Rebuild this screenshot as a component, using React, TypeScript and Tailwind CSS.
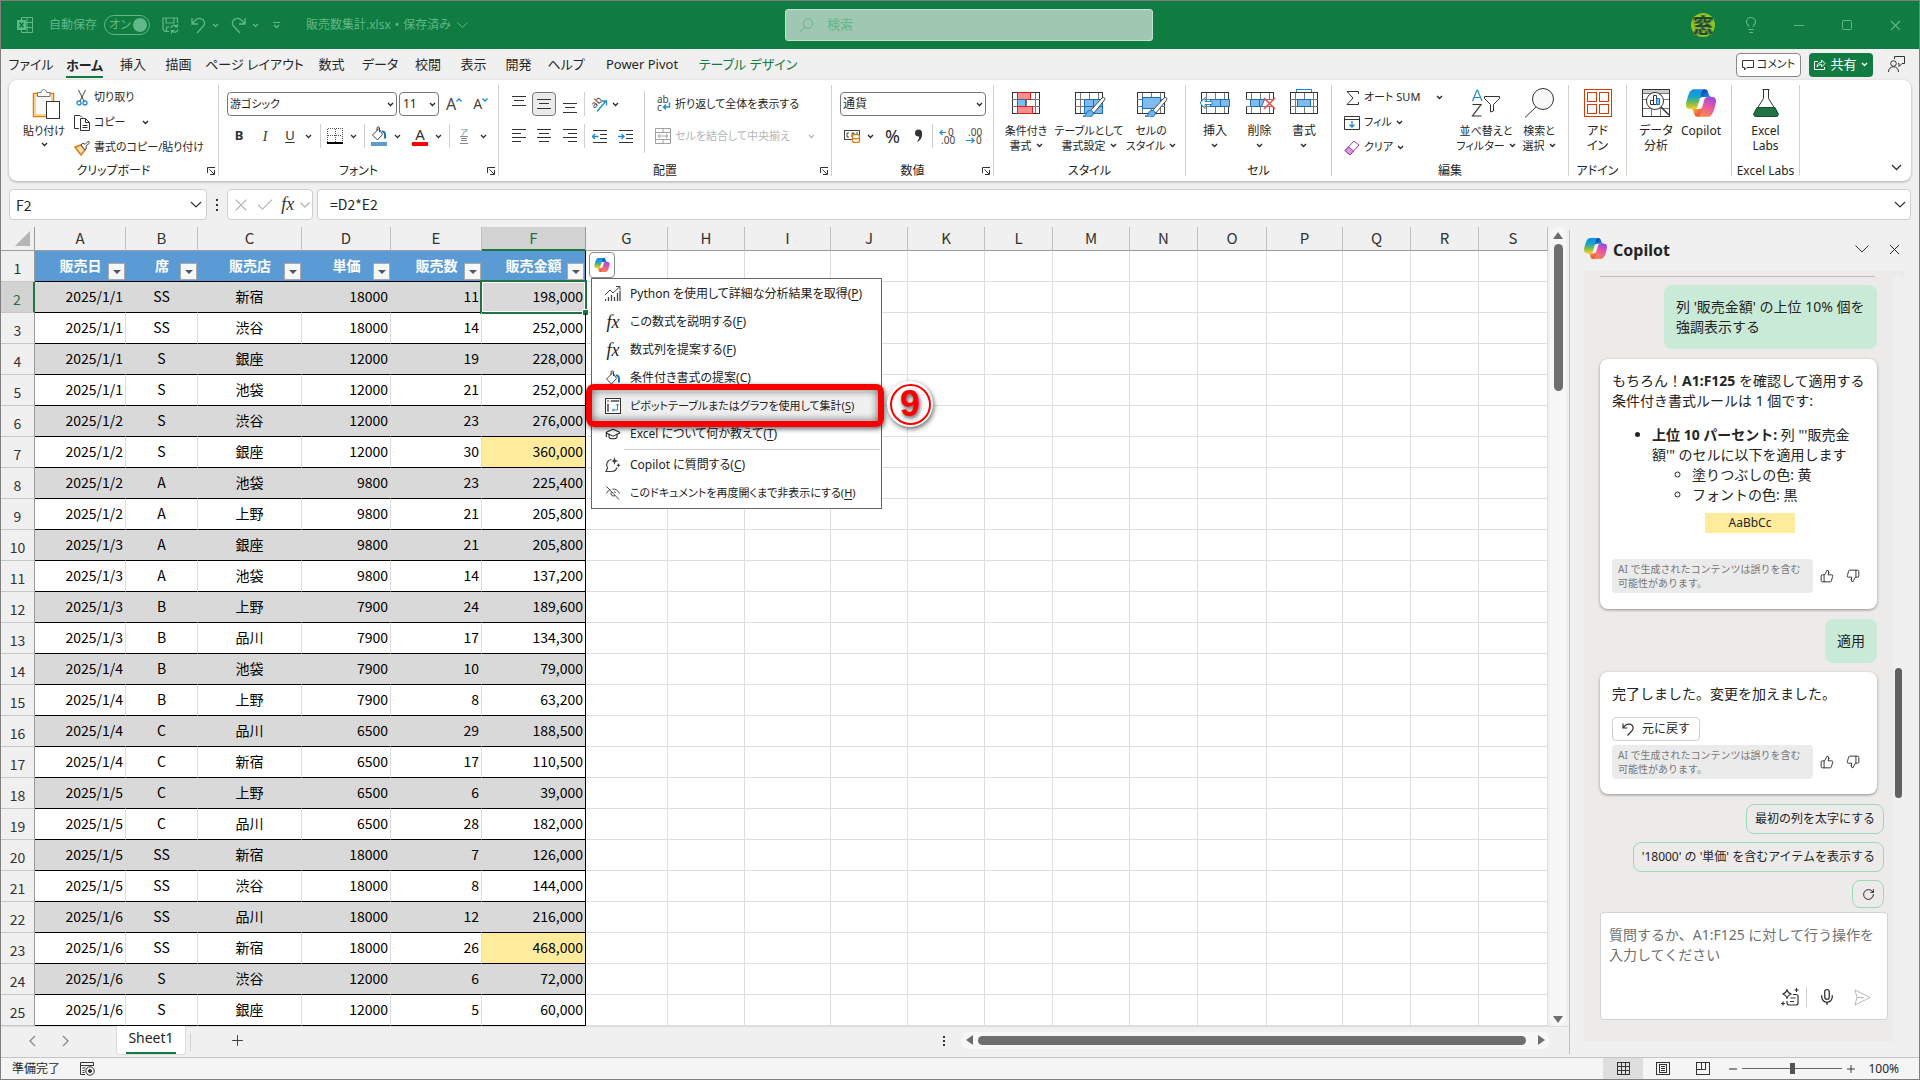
import React, { useState } from "react";
import {
  Lightbulb,
  Minus,
  Square,
  X,
  Check,
  Plus,
  ThumbsUp,
  ThumbsDown,
  Mic,
  RotateCw,
  GraduationCap,
} from "lucide-react";

type Sale = [string, string, string, string, string, string];

const sales: Sale[] = [
  ["2025/1/1", "SS", "新宿", "18000", "11", "198,000"],
  ["2025/1/1", "SS", "渋谷", "18000", "14", "252,000"],
  ["2025/1/1", "S", "銀座", "12000", "19", "228,000"],
  ["2025/1/1", "S", "池袋", "12000", "21", "252,000"],
  ["2025/1/2", "S", "渋谷", "12000", "23", "276,000"],
  ["2025/1/2", "S", "銀座", "12000", "30", "360,000"],
  ["2025/1/2", "A", "池袋", "9800", "23", "225,400"],
  ["2025/1/2", "A", "上野", "9800", "21", "205,800"],
  ["2025/1/3", "A", "銀座", "9800", "21", "205,800"],
  ["2025/1/3", "A", "池袋", "9800", "14", "137,200"],
  ["2025/1/3", "B", "上野", "7900", "24", "189,600"],
  ["2025/1/3", "B", "品川", "7900", "17", "134,300"],
  ["2025/1/4", "B", "池袋", "7900", "10", "79,000"],
  ["2025/1/4", "B", "上野", "7900", "8", "63,200"],
  ["2025/1/4", "C", "品川", "6500", "29", "188,500"],
  ["2025/1/4", "C", "新宿", "6500", "17", "110,500"],
  ["2025/1/5", "C", "上野", "6500", "6", "39,000"],
  ["2025/1/5", "C", "品川", "6500", "28", "182,000"],
  ["2025/1/5", "SS", "新宿", "18000", "7", "126,000"],
  ["2025/1/5", "SS", "渋谷", "18000", "8", "144,000"],
  ["2025/1/6", "SS", "品川", "18000", "12", "216,000"],
  ["2025/1/6", "SS", "新宿", "18000", "26", "468,000"],
  ["2025/1/6", "S", "渋谷", "12000", "6", "72,000"],
  ["2025/1/6", "S", "銀座", "12000", "5", "60,000"],
];

const headers = ["販売日", "席", "販売店", "単価", "販売数", "販売金額"];

const columns = [
  { name: "A", width: 91 },
  { name: "B", width: 72 },
  { name: "C", width: 104 },
  { name: "D", width: 89 },
  { name: "E", width: 91 },
  { name: "F", width: 104 },
  { name: "G", width: 82 },
  { name: "H", width: 77 },
  { name: "I", width: 86 },
  { name: "J", width: 77 },
  { name: "K", width: 77 },
  { name: "L", width: 68 },
  { name: "M", width: 77 },
  { name: "N", width: 68 },
  { name: "O", width: 69 },
  { name: "P", width: 76 },
  { name: "Q", width: 68 },
  { name: "R", width: 68 },
  { name: "S", width: 69 },
];

const tabs = [
  { name: "ファイル", width: "w-[56px]" },
  { name: "ホーム", width: "w-[51px]" },
  { name: "挿入", width: "w-[46px]" },
  { name: "描画", width: "w-[45px]" },
  { name: "ページ レイアウト", width: "w-[107px]" },
  { name: "数式", width: "w-[47px]" },
  { name: "データ", width: "w-[50px]" },
  { name: "校閲", width: "w-[46px]" },
  { name: "表示", width: "w-[45px]" },
  { name: "開発", width: "w-[45px]" },
  { name: "ヘルプ", width: "w-[50px]" },
  { name: "Power Pivot", width: "w-[102px]" },
  { name: "テーブル デザイン", width: "w-[110px]" },
];

function Chevron({ className = "" }: { className?: string }) {
  return (
    <svg width="7" height="5" viewBox="0 0 7 5" className={`shrink-0 ${className}`}>
      <path d="M1 1l2.500 2.500L6 1" fill="none" stroke="currentColor" strokeWidth="1.300" />
    </svg>
  );
}

function BigChevron({ className = "" }: { className?: string }) {
  return (
    <svg width="12" height="7" viewBox="0 0 12 7" className={`shrink-0 ${className}`}>
      <path d="M1 1l5 5 5-5" fill="none" stroke="currentColor" strokeWidth="1.200" />
    </svg>
  );
}

function CopilotLogo({ className = "" }: { className?: string }) {
  return (
    <svg viewBox="0 0 24 22" className={className}>
      <defs>
        <linearGradient id="cpTop" x1="0.9" y1="0.8" x2="0.3" y2="0.1">
          <stop offset="0" stopColor="#1ea8f2" />
          <stop offset="1" stopColor="#1240b8" />
        </linearGradient>
        <linearGradient id="cpBottom" x1="0.2" y1="0.3" x2="0.8" y2="0.9">
          <stop offset="0" stopColor="#f5b83d" />
          <stop offset="1" stopColor="#e8453c" />
        </linearGradient>
        <linearGradient id="cpLeft" x1="0.4" y1="0" x2="0.4" y2="1">
          <stop offset="0" stopColor="#0d8fe8" />
          <stop offset="0.4" stopColor="#1aa6c4" />
          <stop offset="0.7" stopColor="#7fbf45" />
          <stop offset="1" stopColor="#f7cf2b" />
        </linearGradient>
        <linearGradient id="cpRight" x1="0.7" y1="0" x2="0.3" y2="1">
          <stop offset="0" stopColor="#a347e0" />
          <stop offset="0.5" stopColor="#ec5b9c" />
          <stop offset="1" stopColor="#fb8a4a" />
        </linearGradient>
      </defs>
      <path
        fill="url(#cpTop)"
        d="M17.533 1.829A2.528 2.528 0 0015.110 0h-.737a2.531 2.531 0 00-2.484 2.087l-1.263 6.937.314-1.080a2.528 2.528 0 012.424-1.833h4.284l1.797.706 1.731-.706h-.505a2.528 2.528 0 01-2.423-1.829l-.715-2.453z"
      />
      <path
        fill="url(#cpBottom)"
        d="M6.726 20.160A2.528 2.528 0 009.152 22h1.566c1.370 0 2.490-1.100 2.525-2.480l.170-6.690-.357 1.228a2.528 2.528 0 01-2.423 1.830h-4.320l-1.540-.842-1.667.843h.497c1.124 0 2.113.750 2.426 1.840l.697 2.432z"
      />
      <path
        fill="url(#cpLeft)"
        d="M15 0H6.252c-2.500 0-4 3.331-5 6.662-1.184 3.947-2.734 9.225 1.750 9.225H6.780c1.130 0 2.120-.753 2.430-1.847.657-2.317 1.809-6.359 2.713-9.436.460-1.563.842-2.906 1.430-3.742A1.970 1.970 0 0115 0z"
      />
      <path
        fill="url(#cpRight)"
        d="M9 22h8.749c2.500 0 4-3.332 5-6.663 1.184-3.947 2.734-9.226-1.750-9.226H17.220c-1.129 0-2.118.754-2.430 1.848a1149.200 1149.200 0 01-2.713 9.437c-.460 1.564-.842 2.907-1.430 3.743A1.970 1.970 0 019 22z"
      />
    </svg>
  );
}

function FxIcon({ className = "" }: { className?: string }) {
  return (
    <span
      className={`inline-block text-center font-['Liberation_Serif',serif] italic text-[18px] leading-4 ${className}`}
    >
      fx
    </span>
  );
}

function FillIcon() {
  return (
    <svg width="16" height="16" viewBox="0 0 16 16" fill="none">
      <path d="M1.500 9L8 2.500l3.500 6L6.500 14z" stroke="#444" strokeLinejoin="round" />
      <path d="M6 5V2c0-1.500 2.500-1.500 2.500 0v4" stroke="#444" />
      <path d="M11 5.500c2.500-.5 3.500 2 3 7" stroke="#1a6fb5" strokeWidth="2" />
    </svg>
  );
}

function AlignIcon({ lines }: { lines: [number, number][] }) {
  return (
    <svg width="14" height="14" viewBox="0 0 14 14" shapeRendering="crispEdges">
      {lines.map(([x, w], i) => (
        <rect key={i} x={x} y={i * 4} width={w} height="1" fill="#333" />
      ))}
    </svg>
  );
}

function VAlignIcon({ top }: { top: number }) {
  return (
    <svg width="14" height="18" viewBox="0 0 14 18" shapeRendering="crispEdges">
      <rect x="0" y={top} width="14" height="1" fill="#333" />
      <rect x="2" y={top + 4} width="10" height="1" fill="#333" />
      <rect x="0" y={top + 9} width="14" height="1" fill="#333" />
    </svg>
  );
}

function IndentIcon({ right }: { right?: boolean }) {
  return (
    <svg width="15" height="14" viewBox="0 0 15 14" fill="none">
      <path d="M1 1.500h14M8 5.500h7M8 9.500h7M1 13.500h14" stroke="#333" />
      <path
        d={right ? "M0 7.500h6M3.500 5l2.500 2.500L3.500 10" : "M6.500 7.500h-6M3 5L.5 7.500 3 10"}
        stroke="#1e8bd1"
        strokeWidth="1.300"
      />
    </svg>
  );
}

function SheetIcon({ children }: { children?: React.ReactNode }) {
  return (
    <svg width="34" height="28" viewBox="0 0 34 28" fill="none">
      <rect x="3.500" y="3.500" width="27" height="21" fill="#fff" stroke="#333" />
      <path d="M3 10.500h28M3 17.500h28M8.500 4v20M17.500 4v20M26.500 4v20" stroke="#777" />
      {children}
    </svg>
  );
}

function Brush() {
  return (
    <>
      <path d="M18 22L30 9c2-1.500 3.500 0 2.500 2L22 24z" fill="#fff" stroke="#444" />
      <path d="M11 27c3 0 3-2 4-4s5-2 6 0 0 4-3 5-5 0-7-1z" fill="#6fb1e8" stroke="#1a6fb5" />
    </>
  );
}

function Launcher() {
  return (
    <button type="button" aria-label="オプション" className="absolute bottom-0 right-[2px] h-[10px] w-[10px]">
      <svg width="10" height="10" viewBox="0 0 10 10" fill="none">
        <path d="M1.500 7V1.500H9M3.500 3.500l4.500 4.500M8.500 4v4.500H4" stroke="#333" />
      </svg>
    </button>
  );
}

function Group({
  label,
  width,
  launcher,
  children,
}: {
  label: string;
  width: string;
  launcher?: boolean;
  children: React.ReactNode;
}) {
  return (
    <section className={`relative my-[5px] flex shrink-0 flex-col border-r border-[#d0d0d0] ${width}`}>
      <div className="flex flex-1">{children}</div>
      <div className="h-[11px] whitespace-nowrap text-center leading-3">{label}</div>
      {launcher && <Launcher />}
    </section>
  );
}

function LargeButton({
  icon,
  lines,
  width,
  arrow,
  text = "text-[12px]",
}: {
  icon: React.ReactNode;
  lines: string[];
  width: string;
  arrow?: boolean;
  text?: string;
}) {
  return (
    <button type="button" className={`flex shrink-0 flex-col items-center pt-[3px] ${width} ${text}`}>
      <span className="flex h-[30px] items-center justify-center">{icon}</span>
      <span className="mt-[5px] whitespace-nowrap leading-[15px]">
        {lines.map((line, i) => (
          <span key={i} className="flex h-[15px] items-center justify-center gap-1">
            {line}
            {arrow && i === lines.length - 1 && <Chevron />}
          </span>
        ))}
      </span>
    </button>
  );
}

function SmallButton({
  icon,
  label,
  arrow,
  gap = "gap-1",
}: {
  icon: React.ReactNode;
  label: string;
  arrow?: boolean;
  gap?: string;
}) {
  return (
    <button type="button" className="flex h-[25px] items-center whitespace-nowrap text-[11px]">
      <span className="mr-1 flex w-4 justify-center">{icon}</span>
      <span className={`flex items-center ${gap}`}>
        {label}
        {arrow && <Chevron />}
      </span>
    </button>
  );
}

function Divider({ className = "h-6" }: { className?: string }) {
  return <span className={`w-px shrink-0 bg-[#d0d0d0] ${className}`} />;
}

function TitleBar() {
  return (
    <header className="flex h-12 shrink-0 items-center bg-[#107c41] text-[#5fb888]">
      <div className="flex flex-1 items-center pl-4 text-[12px]">
        <svg width="16" height="16" viewBox="0 0 16 16" fill="none" stroke="currentColor">
          <path d="M4.500 3V.500h11v15h-11V13M10 .500v15M4.500 5.500h11M4.500 10.500h11" />
          <rect x="0" y="3" width="9" height="10" fill="currentColor" stroke="none" />
          <path d="M2.500 5.500l4 5M6.500 5.500l-4 5" stroke="#107c41" strokeWidth="1.500" />
        </svg>
        <label className="ml-4 flex items-center gap-[7px]">
          <span>自動保存</span>
          <input type="checkbox" defaultChecked className="sr-only" />
          <span className="flex h-5 w-[46px] items-center justify-between rounded-full border border-current pl-1 pr-[2px]">
            オン
            <span className="h-[14px] w-[14px] rounded-full bg-current" />
          </span>
        </label>
        <button type="button" aria-label="上書き保存" className="ml-3">
          <svg width="17" height="17" viewBox="0 0 17 17" fill="none" stroke="currentColor" strokeWidth="1.200">
            <path d="M7 14.500H3L1 12.500V1h14.500v5M4 1v5h8V1M4.500 14v-4h3" />
            <path d="M9 11a3.500 3.500 0 016-1.500M15.500 7v3h-3M16 12.500a3.500 3.500 0 01-6 1.500M9.500 16.500v-3h3" />
          </svg>
        </button>
        <button type="button" aria-label="元に戻す" className="ml-3 flex items-center gap-[6px]">
          <svg width="15" height="17" viewBox="0 0 15 17" fill="none" stroke="currentColor" strokeWidth="1.300">
            <path d="M1 1v6h6M1.500 6.500C4 3 7 .500 10.500 1.800c3 1 4 4.700 2 7.200L6 16" />
          </svg>
          <Chevron />
        </button>
        <button type="button" aria-label="やり直し" className="ml-[12px] flex items-center gap-[6px]">
          <svg width="15" height="17" viewBox="0 0 15 17" fill="none" stroke="currentColor" strokeWidth="1.300">
            <path d="M14 1v6H8M13.500 6.500C11 3 8 .500 4.500 1.800c-3 1-4 4.700-2 7.200L9 16" />
          </svg>
          <Chevron />
        </button>
        <button type="button" aria-label="クイック アクセス ツール バー" className="ml-[14px] flex flex-col items-center gap-px">
          <span className="h-px w-[7px] bg-current" />
          <Chevron />
        </button>
        <button type="button" className="ml-[26px] flex items-center gap-[6px] whitespace-nowrap">
          <span className="flex gap-1">
            <span>販売数集計.xlsx</span>
            <span>•</span>
            <span>保存済み</span>
          </span>
          <svg width="11" height="6" viewBox="0 0 11 6" fill="none" stroke="currentColor">
            <path d="M.5.5l5 5 5-5" />
          </svg>
        </button>
      </div>
      <label className="flex h-8 w-[368px] items-center rounded-[3px] border border-[#c5dfd0] bg-[#a0c7b1] pl-[13px]">
        <svg width="15" height="15" viewBox="0 0 15 15" fill="none" stroke="currentColor">
          <circle cx="9" cy="5.500" r="4.800" />
          <path d="M5.500 9.200L.7 14" />
        </svg>
        <input
          type="search"
          placeholder="検索"
          aria-label="検索"
          className="ml-[13px] flex-1 bg-transparent text-[13px] outline-none placeholder:text-[#5fb888]"
        />
      </label>
      <div className="flex w-[766px] justify-end">
        <span className="flex w-12 justify-center">
          <span className="flex h-6 w-6 items-center justify-center rounded-full bg-[#8fc31f] font-['Noto_Sans_CJK_JP',sans-serif] text-[20px] font-bold leading-6 text-[#1d4d17] [text-shadow:0_0_1px_#fff,1px_0_0_#1d4d17,-1px_0_0_#1d4d17]">
            窓
          </span>
        </span>
        <button type="button" aria-label="ヒント" className="flex w-12 items-center justify-center">
          <Lightbulb size={18} strokeWidth={1.500} />
        </button>
        <button type="button" aria-label="最小化" className="flex w-12 items-center justify-center">
          <span className="h-px w-[10px] bg-current" />
        </button>
        <button type="button" aria-label="最大化" className="flex w-12 items-center justify-center">
          <Square size={12} strokeWidth={2} />
        </button>
        <button type="button" aria-label="閉じる" className="flex w-12 items-center justify-center">
          <X size={17} strokeWidth={1.500} />
        </button>
      </div>
    </header>
  );
}

function TabRow() {
  return (
    <nav className="flex h-[31px] shrink-0 items-center pl-[2px] text-[13px]">
      {tabs.map((tab, i) => (
        <button
          type="button"
          key={tab.name}
          className={`flex h-full shrink-0 items-center justify-center whitespace-nowrap pt-px ${tab.width} ${
            i === 12 ? "text-[#107c41]" : ""
          }`}
        >
          {i === 1 ? (
            <span className="border-b-2 border-[#107c41] pt-[2px] font-bold leading-[22px]">{tab.name}</span>
          ) : (
            tab.name
          )}
        </button>
      ))}
      <div className="ml-auto flex items-center pr-[14px]">
        <button
          type="button"
          className="flex h-6 w-[65px] items-center justify-center gap-[3px] whitespace-nowrap rounded border border-[#888] bg-white text-[11px]"
        >
          <svg width="12" height="12" viewBox="0 0 12 12" fill="none" stroke="#333">
            <path d="M.5 1.500h11v7H5l-2.500 2.500V8.500h-2z" />
          </svg>
          コメント
        </button>
        <button
          type="button"
          className="ml-2 flex h-6 w-16 items-center justify-center gap-1 whitespace-nowrap rounded bg-[#107c41] text-[13px] text-white"
        >
          <svg width="12" height="13" viewBox="0 0 12 13" fill="none" stroke="currentColor">
            <path d="M4 3.500H.5v8h10V9M3 9c0-3 2-4.500 4.500-4.500V2L11 5.500 7.500 9V6.500C5.500 6.500 4 7.500 3 9z" />
          </svg>
          共有
          <Chevron />
        </button>
        <button type="button" aria-label="フィードバック" className="ml-[15px]">
          <svg width="17" height="17" viewBox="0 0 17 17" fill="none" stroke="#333">
            <circle cx="5.500" cy="7.500" r="2.800" />
            <path d="M.5 16c0-7 10-7 10 0M6.500 3V.500h10v7h-2.500l-3 3V7.500h-1" />
          </svg>
        </button>
      </div>
    </nav>
  );
}

function Ribbon() {
  return (
    <div className="mx-2 flex h-[101px] shrink-0 rounded-lg bg-white text-[12px] shadow-[0_1px_3px_rgba(0,0,0,0.3)]">
      <Group label="クリップボード" width="w-[210px]" launcher>
        <button type="button" className="ml-[10px] flex w-[50px] flex-col items-center pt-1 text-[11px]">
          <svg width="29" height="30" viewBox="0 0 29 30" fill="none" className="ml-1">
            <rect x="1.500" y="4.500" width="20" height="23" fill="#fff" stroke="#e07b10" strokeWidth="1.500" />
            <rect x="3" y="6" width="17" height="20" fill="#f7f9fb" stroke="#f8d48c" strokeWidth="2" />
            <path d="M5.500 7.500v-4H9c.5-4 5-4 5.500 0H18v4z" fill="#fff" stroke="#777" />
            <rect x="14.500" y="12.500" width="13" height="17" fill="#fff" stroke="#333" />
          </svg>
          <span className="mt-1 whitespace-nowrap leading-[15px]">貼り付け</span>
          <Chevron className="mt-1" />
        </button>
        <div className="ml-[5px] flex flex-col items-start">
          <SmallButton
            label="切り取り"
            icon={
              <svg width="12" height="16" viewBox="0 0 12 16" fill="none">
                <path d="M2.500 0l5.500 11M9.500 0L4 11" stroke="#444" />
                <circle cx="3" cy="13" r="2" stroke="#1e8bd1" strokeWidth="1.300" />
                <circle cx="9" cy="13" r="2" stroke="#1e8bd1" strokeWidth="1.300" />
              </svg>
            }
          />
          <SmallButton
            label="コピー"
            arrow
            gap="gap-4"
            icon={
              <svg width="16" height="16" viewBox="0 0 16 16" fill="none" stroke="#333">
                <path d="M5 13.500H.500V.500H6l2 2" />
                <path d="M6.500 3.500h5l4 4v8h-9zM11.500 3.500v4h4M8.500 10.500h5M8.500 12.500h5" />
              </svg>
            }
          />
          <SmallButton
            label="書式のコピー/貼り付け"
            icon={
              <svg width="16" height="16" viewBox="0 0 16 16" fill="none">
                <path d="M1 7l6-2 4 5-4 5z" fill="#fbe0b0" stroke="#e07b10" strokeWidth="1.500" />
                <path d="M7 5l2-2 2 1.500L14.500 1 15.500 3 12 6l.5 2-1.500 2z" fill="#fff" stroke="#444" />
              </svg>
            }
          />
        </div>
      </Group>

      <Group label="フォント" width="w-[280px]" launcher>
        <div className="flex flex-col gap-2 pl-2 pt-[7px]">
          <div className="flex h-6 items-center">
            <span className="relative">
              <select
                aria-label="フォント名"
                className="h-6 w-[170px] appearance-none rounded border border-[#777] bg-white pl-[2px] text-[11px] leading-4"
              >
                <option>游ゴシック</option>
              </select>
              <Chevron className="absolute right-[3px] top-[10px]" />
            </span>
            <span className="relative ml-[2px]">
              <select
                aria-label="フォント サイズ"
                className="h-6 w-10 appearance-none rounded border border-[#777] bg-white pl-[3px] leading-4"
              >
                <option>11</option>
              </select>
              <Chevron className="absolute right-[3px] top-[10px]" />
            </span>
            <button type="button" aria-label="フォント サイズの拡大" className="ml-[7px] flex items-start text-[16px] leading-5 text-[#444]">
              A
              <svg width="6" height="4" viewBox="0 0 6 4" className="mt-1" fill="none" stroke="#1e8bd1" strokeWidth="1.300">
                <path d="M.5 3.500L3 1l2.500 2.500" />
              </svg>
            </button>
            <button type="button" aria-label="フォント サイズの縮小" className="ml-[11px] flex items-start text-[14px] leading-5 text-[#444]">
              A
              <svg width="6" height="4" viewBox="0 0 6 4" className="mt-1" fill="none" stroke="#1e8bd1" strokeWidth="1.300">
                <path d="M.5.500L3 3 5.500.500" />
              </svg>
            </button>
          </div>
          <div className="flex h-6 items-center text-[#333]">
            <button type="button" className="w-6 text-[13px] font-bold">B</button>
            <button type="button" className="w-7 font-['Liberation_Serif',serif] text-[14px] italic">I</button>
            <button type="button" className="w-[22px] text-[13px] underline underline-offset-2">U</button>
            <Chevron className="ml-1" />
            <Divider className="ml-[8px] h-6" />
            <button type="button" aria-label="罫線" className="ml-[6px] flex items-center gap-[7px]">
              <svg width="16" height="16" viewBox="0 0 16 16" fill="none" stroke="#555" shapeRendering="crispEdges">
                <path d="M.5.500h15v14M.5.500v14M8 1v13M1 7.500h14" strokeDasharray="1 1" />
                <path d="M0 15h16" stroke="#000" strokeWidth="2" />
              </svg>
              <Chevron />
            </button>
            <Divider className="ml-[7px] h-6" />
            <button type="button" aria-label="塗りつぶしの色" className="ml-[6px] flex items-center gap-[7px]">
              <span className="flex flex-col border-b-4 border-[#5b9bd5]">
                <FillIcon />
              </span>
              <Chevron />
            </button>
            <button type="button" aria-label="フォントの色" className="ml-[11px] flex items-center gap-[7px]">
              <span className="w-4 border-b-4 border-[#f00] text-center text-[15px] leading-4">A</span>
              <Chevron />
            </button>
            <Divider className="ml-[7px] h-6" />
            <button type="button" aria-label="ふりがな" className="ml-[8px] flex items-center gap-[10px] text-[#888]">
              <span className="flex w-3 flex-col items-center">
                <span className="text-[8px] leading-2">ア</span>
                <svg width="8" height="8" viewBox="0 0 8 8" stroke="currentColor" fill="none">
                  <path d="M0 .500h8M1 2.500h6M1 4.500h6M0 7.500h8" />
                </svg>
              </span>
              <Chevron className="text-[#333]" />
            </button>
          </div>
        </div>
      </Group>

      <Group label="配置" width="w-[333px]" launcher>
        <div className="flex flex-col gap-2 pl-[7px] pt-[7px]">
          <div className="flex h-6 items-center">
            <button type="button" aria-label="上揃え" className="flex w-[26px] justify-center">
              <VAlignIcon top={1} />
            </button>
            <button
              type="button"
              aria-label="上下中央揃え"
              className="flex h-6 w-6 items-center justify-center rounded border border-[#777] bg-[#ebebeb]"
            >
              <VAlignIcon top={4} />
            </button>
            <button type="button" aria-label="下揃え" className="flex w-7 justify-center">
              <VAlignIcon top={8} />
            </button>
            <Divider />
            <button type="button" aria-label="方向" className="ml-[6px] flex items-center gap-[5px]">
              <svg width="16" height="16" viewBox="0 0 16 16" fill="none" className="overflow-visible">
                <path d="M6 15.500L15 5M11 5h4.500v4.500" stroke="#1e8bd1" strokeWidth="1.300" />
                <text x="0" y="10" fontSize="10" fill="#444" transform="rotate(-45 5 7)">
                  ab
                </text>
              </svg>
              <Chevron />
            </button>
          </div>
          <div className="flex h-6 items-center">
            <button type="button" aria-label="左揃え" className="flex w-[26px] justify-center">
              <AlignIcon lines={[[0, 14], [0, 9], [0, 14], [0, 9]]} />
            </button>
            <button type="button" aria-label="中央揃え" className="flex w-6 justify-center">
              <AlignIcon lines={[[0, 14], [2, 10], [0, 14], [2, 10]]} />
            </button>
            <button type="button" aria-label="右揃え" className="flex w-7 justify-center">
              <AlignIcon lines={[[0, 14], [5, 9], [0, 14], [5, 9]]} />
            </button>
            <Divider />
            <button type="button" aria-label="インデントを減らす" className="ml-[7px]">
              <IndentIcon />
            </button>
            <button type="button" aria-label="インデントを増やす" className="ml-[11px]">
              <IndentIcon right />
            </button>
          </div>
        </div>
        <Divider className="ml-[11px] mt-[6px] h-[62px]" />
        <div className="flex flex-col gap-2 pl-[10px] pt-[7px] text-[11px]">
          <button type="button" className="flex h-6 items-center whitespace-nowrap">
            <svg width="16" height="18" viewBox="0 0 16 18" className="mr-1 overflow-visible">
              <text x="2" y="8" fontSize="10" fill="#444">ab</text>
              <text x="2" y="16" fontSize="10" fill="#444">c</text>
              <path d="M14.500 7.500V12H8.500M11 9.500L8.500 12l2.500 2.500" fill="none" stroke="#1e8bd1" strokeWidth="1.400" />
            </svg>
            折り返して全体を表示する
          </button>
          <button type="button" className="flex h-6 items-center whitespace-nowrap text-[#b5b5b5]">
            <svg width="16" height="16" viewBox="0 0 16 16" className="mr-1" fill="none" stroke="#a0a0a0">
              <path d="M.5.500h15v15H.5zM.5 4.500h15M.5 11.500h15M8 .500v4M8 11.500v4M3 8h10M5 6L3 8l2 2M11 6l2 2-2 2" />
            </svg>
            セルを結合して中央揃え
            <Chevron className="ml-[18px]" />
          </button>
        </div>
      </Group>

      <Group label="数値" width="w-[162px]" launcher>
        <div className="flex flex-col gap-2 pl-2 pt-[7px]">
          <span className="relative">
            <select
              aria-label="表示形式"
              className="block h-6 w-[146px] appearance-none rounded border border-[#777] bg-white pl-[2px] leading-4"
            >
              <option>通貨</option>
            </select>
            <Chevron className="absolute right-[3px] top-[10px]" />
          </span>
          <div className="flex h-6 items-center">
            <button type="button" aria-label="通貨表示形式" className="ml-1 flex items-center gap-[6px]">
              <svg width="17" height="14" viewBox="0 0 17 14" fill="none">
                <rect x=".5" y="1.500" width="15" height="9" stroke="#444" />
                <path d="M5 4H3v4h2M8 8V4h2v4M12 4h2" stroke="#444" />
                <path d="M8.500 6.500v6c1.500 1.500 5.500 1.500 7 0v-6c-1.500-1.500-5.500-1.500-7 0zM8.500 9c2 1 5 1 7 0" fill="#fff" stroke="#e07b10" strokeWidth="1.300" />
              </svg>
              <Chevron />
            </button>
            <button type="button" className="ml-[10px] w-[17px] text-[18px] leading-6">%</button>
            <button type="button" aria-label="桁区切りスタイル" className="ml-[13px]">
              <svg width="9" height="14" viewBox="0 0 9 14" fill="#333">
                <circle cx="4.500" cy="4" r="3.500" />
                <path d="M8 4c.5 5-2 8-5.500 9 2-2 3-4 2.500-6z" />
              </svg>
            </button>
            <Divider className="ml-[9px] h-6" />
            <button type="button" aria-label="小数点以下の表示桁数を増やす" className="ml-[6px]">
              <svg width="16" height="17" viewBox="0 0 16 17" className="overflow-visible">
                <text x="9" y="8" fontSize="10" fill="#444">0</text>
                <text x="2" y="16" fontSize="10" fill="#444">.00</text>
                <path d="M7 4.500H1M3.500 2L1 4.500 3.500 7" fill="none" stroke="#1e8bd1" strokeWidth="1.200" />
              </svg>
            </button>
            <button type="button" aria-label="小数点以下の表示桁数を減らす" className="ml-[11px]">
              <svg width="16" height="17" viewBox="0 0 16 17" className="overflow-visible">
                <text x="2" y="8" fontSize="10" fill="#444">.00</text>
                <text x="10" y="16" fontSize="10" fill="#444">0</text>
                <path d="M0 12.500h8M5.500 10L8 12.500 5.500 15" fill="none" stroke="#1e8bd1" strokeWidth="1.200" />
              </svg>
            </button>
          </div>
        </div>
      </Group>

      <Group label="スタイル" width="w-[192px]">
        <LargeButton
          width="w-[64px]"
          text="text-[11px]"
          lines={["条件付き", "書式"]}
          arrow
          icon={
            <SheetIcon>
              <rect x="8.500" y="3.500" width="13" height="7" fill="#ff8f8f" stroke="#d9221c" />
              <rect x="8.500" y="10.500" width="8" height="7" fill="#7fbaf0" stroke="#1a6fb5" />
              <rect x="8.500" y="17.500" width="15" height="7" fill="#ff8f8f" stroke="#d9221c" />
            </SheetIcon>
          }
        />
        <LargeButton
          width="w-[62px]"
          text="text-[11px]"
          lines={["テーブルとして", "書式設定"]}
          arrow
          icon={
            <SheetIcon>
              <path d="M12.500 10.500h18v14h-18zM12.500 17.500h18M21.500 10.500v14" fill="#7fbaf0" stroke="#1a6fb5" />
              <Brush />
            </SheetIcon>
          }
        />
        <LargeButton
          width="w-[62px]"
          text="text-[11px]"
          lines={["セルの", "スタイル"]}
          arrow
          icon={
            <SheetIcon>
              <rect x="8.500" y="8.500" width="18" height="11" fill="#7fbaf0" stroke="#1a6fb5" />
              <Brush />
            </SheetIcon>
          }
        />
      </Group>

      <Group label="セル" width="w-[146px]">
        <div className="flex pl-[6px]">
          <LargeButton
            width="w-[46px]"
            lines={["挿入", ""]}
            arrow
            icon={
              <SheetIcon>
                <path d="M12.500 10.500h19v7h-19zM22.500 10.500v7" fill="#7fbaf0" stroke="#1a6fb5" />
                <path d="M7 8.500L2 14l5 5.500v-4h7v-3H7z" fill="#fff" stroke="#1e8bd1" />
              </SheetIcon>
            }
          />
          <LargeButton
            width="w-[43px]"
            lines={["削除", ""]}
            arrow
            icon={
              <SheetIcon>
                <path d="M3 11h28v6H3z" fill="#fff" />
                <path d="M7.500 10.500h14l-3 7h-11zM16.500 10.500v7" fill="#7fbaf0" stroke="#1a6fb5" />
                <path d="M21 9l11 11M32 9L21 20" stroke="#f04848" strokeWidth="1.500" />
              </SheetIcon>
            }
          />
          <LargeButton
            width="w-[46px]"
            lines={["書式", ""]}
            arrow
            icon={
              <SheetIcon>
                <rect x="10.500" y="10.500" width="13" height="7" fill="#7fbaf0" stroke="#1a6fb5" />
                <path d="M9.500.500h15M9.500 0v3M24.500 0v3" stroke="#1e8bd1" />
              </SheetIcon>
            }
          />
        </div>
      </Group>

      <Group label="編集" width="w-[237px]">
        <div className="flex w-[124px] flex-col items-start pl-3">
          <SmallButton
            label="オート SUM"
            arrow
            gap="gap-4"
            icon={
              <svg width="13" height="14" viewBox="0 0 13 14" fill="none" stroke="#333">
                <path d="M12.500 3V.500H1L7 7l-6 6.500h11.500V11" />
              </svg>
            }
          />
          <SmallButton
            label="フィル"
            arrow
            icon={
              <svg width="16" height="14" viewBox="0 0 16 14" fill="none" stroke="#333">
                <path d="M.5.500h15v13H.5zM.5 3.500h15" />
                <path d="M8 5v6M5.500 8.500L8 11l2.500-2.500" stroke="#1e8bd1" strokeWidth="1.300" />
              </svg>
            }
          />
          <SmallButton
            label="クリア"
            arrow
            icon={
              <svg width="16" height="16" viewBox="0 0 16 16" fill="none" stroke="#9b3ba3">
                <path d="M1 10.500L10 1l5 4-9 10z" fill="#fff" />
                <path d="M1 10.500L4.500 7l5 4L6 15z" fill="#d99ddf" />
              </svg>
            }
          />
        </div>
        <LargeButton
          width="w-[60px]"
          text="text-[11px]"
          lines={["並べ替えと", "フィルター"]}
          arrow
          icon={
            <svg width="30" height="28" viewBox="0 0 30 28" fill="none">
              <path d="M1.500 12L6 1h.500L11 12M3 8.500h6.500" stroke="#1e8bd1" strokeWidth="1.200" />
              <path d="M1.500 15.500h8.500L1.500 27h9" stroke="#333" strokeWidth="1.200" />
              <path d="M13.500 7.500h15v2l-6 6v6.500l-3 1v-7.500l-6-6z" stroke="#333" />
            </svg>
          }
        />
        <LargeButton
          width="w-[46px]"
          text="text-[11px]"
          lines={["検索と", "選択"]}
          arrow
          icon={
            <svg width="30" height="30" viewBox="0 0 30 30" fill="none" stroke="#333">
              <circle cx="19" cy="11" r="10.500" fill="#f8f8f8" />
              <path d="M12 19L1 29.500" />
            </svg>
          }
        />
      </Group>

      <Group label="アドイン" width="w-[58px]">
        <LargeButton
          width="w-[57px]"
          lines={["アド", "イン"]}
          icon={
            <svg width="28" height="28" viewBox="0 0 28 28" fill="none" stroke="#d83b01" shapeRendering="crispEdges">
              <path d="M.5.500h27v27H.5zM3.500 3.500h9v9h-9zM15.500 3.500h9v9h-9zM3.500 15.500h9v9h-9zM15.500 15.500h9v9h-9z" />
            </svg>
          }
        />
      </Group>

      <Group label="" width="w-[105px]">
        <div className="flex pl-1">
          <LargeButton
            width="w-[50px]"
            lines={["データ", "分析"]}
            icon={
              <svg width="28" height="28" viewBox="0 0 28 28" fill="none" stroke="#333">
                <rect x=".5" y=".5" width="27" height="27" fill="#fff" />
                <path d="M1 1h26v3H1z" fill="#ccc" stroke="none" />
                <path d="M1 4.500h26M1 10.500h26M1 19.500h26M9.500 20v7M18.500 20v7" stroke="#777" />
                <circle cx="13" cy="12" r="8.500" fill="#fff" />
                <path d="M19 18l8 8" strokeWidth="1.500" />
                <path d="M8.500 11.500h3v4h-3zM11.500 6.500h3v9h-3z" />
                <path d="M14.500 9.500h3v6h-3z" fill="#7fbaf0" stroke="#1a6fb5" />
              </svg>
            }
          />
          <LargeButton width="w-10" lines={["Copilot"]} icon={<CopilotLogo className="h-7 w-[30px]" />} />
        </div>
      </Group>

      <Group label="Excel Labs" width="w-[68px]">
        <LargeButton
          width="w-[67px]"
          lines={["Excel", "Labs"]}
          icon={
            <svg width="26" height="28" viewBox="0 0 26 28" fill="none">
              <path d="M9.500.500h7M10.500.500v9L1 24.500c-.5 1.500.500 3 2 3h20c1.500 0 2.500-1.500 2-3L15.500 9.500v-9" stroke="#333" />
              <path d="M4 18.500h18l3 6c.5 1.500-.5 3-2 3H3c-1.500 0-2.500-1.500-2-3z" fill="#217346" stroke="#1c4a30" />
            </svg>
          }
        />
      </Group>

      <button type="button" aria-label="リボンを折りたたむ" className="mb-[10px] ml-auto mr-[9px] self-end text-[#333]">
        <svg width="11" height="7" viewBox="0 0 11 7" fill="none" stroke="currentColor" strokeWidth="1.300">
          <path d="M1 1l4.500 4.500L10 1" />
        </svg>
      </button>
    </div>
  );
}

function FormulaBar() {
  const [formula, setFormula] = useState("=D2*E2");

  return (
    <div className="mx-2 mt-2 flex h-[31px] shrink-0 items-stretch text-[14px]">
      <label className="flex w-[198px] items-center rounded border border-[#cfcfcf] bg-white pl-[6px] pr-1">
        <input
          aria-label="名前ボックス"
          defaultValue="F2"
          className="min-w-0 flex-1 bg-transparent pt-px font-['Noto_Sans_CJK_JP',sans-serif] outline-none"
        />
        <BigChevron className="text-[#333]" />
      </label>
      <span className="flex w-5 flex-col items-center justify-center gap-[3px]">
        <span className="h-[2px] w-[2px] bg-[#333]" />
        <span className="h-[2px] w-[2px] bg-[#333]" />
        <span className="h-[2px] w-[2px] bg-[#333]" />
      </span>
      <div className="flex w-[86px] items-center justify-between rounded border border-[#cfcfcf] bg-white pl-[3px] pr-[2px] text-[#b5b5b5]">
        <button type="button" aria-label="キャンセル">
          <X size={20} strokeWidth={1.300} />
        </button>
        <button type="button" aria-label="入力">
          <Check size={20} strokeWidth={1.300} />
        </button>
        <button type="button" aria-label="関数の挿入" className="text-[#333]">
          <FxIcon className="w-4" />
        </button>
        <svg width="10" height="6" viewBox="0 0 10 6" fill="none" stroke="currentColor" strokeWidth="1.300">
          <path d="M.5.500L5 5 9.500.500" />
        </svg>
      </div>
      <label className="ml-1 flex flex-1 items-center rounded border border-[#cfcfcf] bg-white pl-3 pr-1">
        <input
          aria-label="数式バー"
          value={formula}
          onChange={(e) => setFormula(e.target.value)}
          className="min-w-0 flex-1 bg-transparent font-['Noto_Sans_CJK_JP',sans-serif] outline-none"
        />
        <BigChevron className="text-[#333]" />
      </label>
    </div>
  );
}

function FilterButton() {
  return (
    <button
      type="button"
      aria-label="フィルター"
      className="absolute bottom-px right-px flex h-[17px] w-[17px] items-center justify-center border border-[#aaa] bg-[#f6f7f9]"
    >
      <span className="border-x-4 border-t-4 border-x-transparent border-t-[#555]" />
    </button>
  );
}

function SheetTable() {
  return (
    <table className="w-[1547px] table-fixed border-separate border-spacing-0 bg-white font-['Noto_Sans_CJK_JP',sans-serif] text-[14px] leading-5 text-black">
      <colgroup>
        <col style={{ width: 34 }} />
        {columns.map((col) => (
          <col key={col.name} style={{ width: col.width }} />
        ))}
      </colgroup>
      <thead>
        <tr className="h-6 bg-[#f0f0f0] text-[15px]">
          <th className="border-b border-r border-[#9b9b9b] p-0">
            <span className="ml-auto mr-1 block h-0 w-0 border-b-[15px] border-l-[15px] border-b-[#b5b5b5] border-l-transparent" />
          </th>
          {columns.map((col) => (
            <th
              key={col.name}
              className={`p-0 pb-px font-normal ${
                col.name === "F"
                  ? "border-b-2 border-r border-b-[#217346] border-r-[#9b9b9b] bg-[#d2d2d2] text-[#217346]"
                  : "border-b border-r border-b-[#9b9b9b] border-r-[#c0c0c0] text-[#333]"
              }`}
            >
              {col.name}
            </th>
          ))}
        </tr>
      </thead>
      <tbody>
        <tr className="h-[31px]">
          <th className="border-b border-r border-b-[#c8c8c8] border-r-[#9b9b9b] bg-[#f0f0f0] p-0 pt-1 font-normal text-[#333]">
            1
          </th>
          {headers.map((header, i) => (
            <th
              key={header}
              className={`relative border-b border-b-black bg-[#5b9bd5] p-0 pb-[3px] text-white ${
                i === 5 ? "border-r border-r-black" : ""
              }`}
            >
              {header}
              <FilterButton />
            </th>
          ))}
          {columns.slice(6).map((col) => (
            <td key={col.name} className="border-b border-r border-[#dedede]" />
          ))}
        </tr>
        {sales.map((sale, i) => {
          const shaded = i % 2 === 0;
          const top = sale[5] === "360,000" || sale[5] === "468,000";
          return (
            <tr key={i} className="h-[31px]">
              <th
                className={`border-b p-0 pt-1 font-normal ${
                  i === 0
                    ? "border-r-2 border-b-[#c8c8c8] border-r-[#217346] bg-[#d2d2d2] text-[#217346]"
                    : "border-r border-b-[#c8c8c8] border-r-[#9b9b9b] bg-[#f0f0f0] text-[#333]"
                }`}
              >
                {i + 2}
              </th>
              {sale.map((value, c) => (
                <td
                  key={c}
                  className={`relative border-b border-b-black pb-[2px] pt-0 ${
                    c === 1 || c === 2 ? "px-0 text-center" : "pl-0 pr-[2px] text-right"
                  } ${c === 5 ? "border-r border-r-black" : shaded ? "border-r border-r-[#d9d9d9]" : "border-r border-r-[#dedede]"} ${
                    c === 5 && top ? "bg-[#ffeb9c]" : shaded ? "bg-[#d9d9d9]" : ""
                  }`}
                >
                  {value}
                  {i === 0 && c === 5 && (
                    <>
                      <span className="absolute -bottom-[2px] -left-[2px] -right-[2px] -top-[2px] border-2 border-[#217346] shadow-[inset_0_0_0_1px_#fff]" />
                      <span className="absolute -bottom-[3px] -right-[3px] h-[6px] w-[6px] border-l border-t border-white bg-[#217346]" />
                    </>
                  )}
                </td>
              ))}
              {columns.slice(6).map((col) => (
                <td key={col.name} className="border-b border-r border-[#dedede]" />
              ))}
            </tr>
          );
        })}
      </tbody>
    </table>
  );
}

function MenuItem({ icon, label, mnemonic }: { icon: React.ReactNode; label: string; mnemonic: string }) {
  return (
    <button type="button" role="menuitem" className="flex h-7 w-full items-center whitespace-nowrap text-left">
      <span className="ml-3 mr-2 flex w-[18px] justify-center">{icon}</span>
      <span>
        {label}(<u className="underline-offset-2">{mnemonic}</u>)
      </span>
    </button>
  );
}

function CopilotMenu() {
  return (
    <div className="absolute left-[588px] top-[25px] text-[12px]">
      <button
        type="button"
        aria-label="Copilot"
        className="flex h-[26px] w-[26px] items-center justify-center rounded border border-[#8a8a8a] bg-white"
      >
        <CopilotLogo className="h-[14px] w-4" />
      </button>
      <div role="menu" className="ml-[2px] w-[291px] border border-[#666] bg-white py-px text-[#222]">
        <MenuItem
          label="Python を使用して詳細な分析結果を取得"
          mnemonic="P"
          icon={
            <svg width="16" height="16" viewBox="0 0 16 16" fill="none" stroke="#444">
              <path d="M.5 13v2M3.500 11v4M6.500 9v6M9.500 11v4M12.500 7v8M15 5v10" strokeWidth="1.300" />
              <path d="M0 9l5-5 3 3 6.500-6M11 .500h4v4" />
            </svg>
          }
        />
        <MenuItem label="この数式を説明する" mnemonic="F" icon={<FxIcon />} />
        <MenuItem label="数式列を提案する" mnemonic="F" icon={<FxIcon />} />
        <MenuItem label="条件付き書式の提案" mnemonic="C" icon={<FillIcon />} />
        <div className="bg-[#f0f0f0] text-[11px]">
          <MenuItem
            label="ピボットテーブルまたはグラフを使用して集計"
            mnemonic="S"
            icon={
              <svg width="16" height="16" viewBox="0 0 16 16" fill="none" stroke="#333">
                <rect x=".5" y=".5" width="15" height="15" fill="#fff" />
                <path d="M2.500 2.500h1v1h-1zM6 2.500h8v1H6zM2.500 6h1v7.500h-1z" stroke="#777" />
                <path d="M12.500 6v6H7.500M11 7.500L12.500 6 14 7.500M9 10.500L7.500 12 9 13.500" stroke="#1e8bd1" />
              </svg>
            }
          />
        </div>
        <MenuItem
          label="Excel について何か教えて"
          mnemonic="T"
          icon={<GraduationCap size={16} strokeWidth={1.600} className="-scale-x-100" />}
        />
        <div className="ml-8 mr-px flex h-[3px] items-center">
          <span className="h-px w-full bg-[#ccc]" />
        </div>
        <MenuItem
          label="Copilot に質問する"
          mnemonic="C"
          icon={
            <svg width="16" height="16" viewBox="0 0 16 16" fill="none" stroke="#444" strokeWidth="1.200">
              <path d="M6.500 2.500A5.500 5.500 0 002.500 11L1 14.500h6A5.500 5.500 0 0012 10.500" />
              <path d="M9.500 0l1 3 3 1-3 1-1 3-1-3-2-1 2-1zM13.500 6l.7 1.500 1.500.7-1.500.7-.7 1.500-.7-1.500-1.500-.7 1.500-.7z" fill="#444" stroke="none" />
            </svg>
          }
        />
        <div className="text-[11px]">
          <MenuItem
            label="このドキュメントを再度開くまで非表示にする"
            mnemonic="H"
            icon={
              <svg width="16" height="16" viewBox="0 0 16 16" fill="none" stroke="#444">
                <path d="M1.500 1.500l12.500 13M1.500 8.500c1-2 2.500-3.500 4-4M7.500 4c3-.300 5.500 1.500 7 4.500" />
                <path d="M6.500 7a2.500 2.500 0 003.500 3.500M9 6.500a2.500 2.500 0 011.500 1.500" />
              </svg>
            }
          />
        </div>
      </div>
      {/* step marker */}
      <div className="absolute -left-[3px] top-[132px] h-[43px] w-[298px] rounded-lg border-[6px] border-[#f80000] shadow-[1px_2px_5px_rgba(0,0,0,0.6),inset_0_0_8px_rgba(0,0,0,0.6)]" />
      <div className="absolute left-[298px] top-[129px] flex h-[46px] w-[46px] items-center justify-center rounded-full bg-white shadow-[1px_2px_5px_rgba(0,0,0,0.6)]">
        <span className="flex h-[41px] w-[41px] items-center justify-center rounded-full border-2 border-[#f80000] font-['Liberation_Sans',sans-serif] text-[36px] font-bold leading-none text-[#f80000] [text-shadow:1px_2px_4px_rgba(0,0,0,0.7)]">
          9
        </span>
      </div>
    </div>
  );
}

function SheetTabs() {
  return (
    <div className="flex h-[31px] shrink-0 items-start border-t border-[#dcdcdc]">
      <div className="flex h-7 w-[115px] items-center text-[#888]">
        <button type="button" aria-label="前のシート" className="ml-[28px]">
          <svg width="7" height="12" viewBox="0 0 7 12" fill="none" stroke="currentColor" strokeWidth="1.300">
            <path d="M6 1L1 6l5 5" />
          </svg>
        </button>
        <button type="button" aria-label="次のシート" className="ml-[26px]">
          <svg width="7" height="12" viewBox="0 0 7 12" fill="none" stroke="currentColor" strokeWidth="1.300">
            <path d="M1 1l5 5-5 5" />
          </svg>
        </button>
      </div>
      <button
        type="button"
        className="-mt-px flex h-[29px] w-[70px] justify-center rounded-b border border-t-0 border-[#dcdcdc] bg-white text-[14px]"
      >
        <span className="border-b-2 border-[#107c41] px-[2px] leading-[23px]">Sheet1</span>
      </button>
      <Divider className="ml-1 mt-[6px] h-[18px]" />
      <button type="button" aria-label="新しいシート" className="ml-[38px] mt-[5px] text-[#333]">
        <Plus size={17} strokeWidth={1.300} />
      </button>
      <div className="ml-auto flex h-7 items-center">
        <span className="mr-4 flex flex-col gap-[2px]">
          <span className="h-[2px] w-[2px] bg-[#333]" />
          <span className="h-[2px] w-[2px] bg-[#333]" />
          <span className="h-[2px] w-[2px] bg-[#333]" />
        </span>
        <div className="mb-[2px] mr-[19px] flex h-[17px] w-[589px] items-center rounded-full bg-[#f7f7f7] px-[5px]">
          <span className="border-y-[5px] border-r-[7px] border-y-transparent border-r-[#6e6e6e]" />
          <span className="ml-[5px] mr-3 h-[9px] flex-1 rounded-full bg-[#6e6e6e]" />
          <span className="border-y-[5px] border-l-[7px] border-y-transparent border-l-[#6e6e6e]" />
        </div>
      </div>
    </div>
  );
}

function Feedback() {
  return (
    <div className="flex items-center">
      <p className="w-[201px] rounded bg-[#ebebeb] px-[6px] py-[3px] text-[10px] leading-[14px] text-[#777]">
        AI で生成されたコンテンツは誤りを含む可能性があります。
      </p>
      <button type="button" aria-label="良い" className="ml-[7px]">
        <ThumbsUp size={14} strokeWidth={1.500} />
      </button>
      <button type="button" aria-label="悪い" className="ml-3">
        <ThumbsDown size={14} strokeWidth={1.500} />
      </button>
    </div>
  );
}

function CopilotPane() {
  const [prompt, setPrompt] = useState("");

  return (
    <aside className="mb-[3px] mt-[10px] flex w-[350px] shrink-0 flex-col border-l border-[#c0c0c0] pl-[14px] pr-[15px] text-[14px] leading-5 text-[#242424] [font-feature-settings:normal]">
      <div className="flex h-[41px] shrink-0 items-center pb-[5px]">
        <CopilotLogo className="h-[21px] w-[23px]" />
        <h2 className="ml-[6px] mt-1 text-[16px] font-bold">Copilot</h2>
        <button type="button" aria-label="その他" className="ml-auto mt-[2px]">
          <svg width="14" height="8" viewBox="0 0 14 8" fill="none" stroke="#333">
            <path d="M.5.500L7 7 13.500.500" />
          </svg>
        </button>
        <button type="button" aria-label="閉じる" className="ml-[17px] mr-px mt-[2px]">
          <X size={17} strokeWidth={1.400} />
        </button>
      </div>
      <div className="flex min-h-0 flex-1 bg-[#ecebea]">
        <div className="flex min-w-0 flex-1 flex-col pl-4">
          <div className="mr-[18px] mt-[5px] h-px bg-[#bdbdbd]" />
          <div className="mr-4 mt-2 w-[213px] self-end rounded-lg bg-[#c9ead7] p-3">
            列 '販売金額' の上位 10% 個を強調表示する
          </div>
          <article className="mr-4 mt-[10px] h-[250px] rounded-lg bg-white px-3 pt-3 shadow-[0_1px_3px_rgba(0,0,0,0.4)]">
            <p>
              もちろん！<b>A1:F125</b> を確認して適用する条件付き書式ルールは 1 個です:
            </p>
            <ul className="mt-[14px] list-disc pl-10">
              <li>
                <b>上位 10 パーセント:</b> 列 "'販売金額'" のセルに以下を適用します
                <ul className="list-[circle] pl-10">
                  <li>塗りつぶしの色: 黄</li>
                  <li>フォントの色: 黒</li>
                </ul>
              </li>
            </ul>
            <p className="ml-[93px] mt-2 h-5 w-[90px] bg-[#ffeb9c] text-center text-[12px]">AaBbCc</p>
            <div className="mt-[26px]">
              <Feedback />
            </div>
          </article>
          <div className="mr-4 mt-[10px] self-end rounded-lg bg-[#c9ead7] p-3">適用</div>
          <article className="mr-4 mt-[9px] h-[122px] rounded-lg bg-white px-3 pt-3 shadow-[0_1px_3px_rgba(0,0,0,0.4)]">
            <p>完了しました。変更を加えました。</p>
            <button
              type="button"
              className="mb-1 mt-[13px] flex h-6 w-[88px] items-center justify-center gap-2 rounded border border-[#d1d1d1] text-[12px]"
            >
              <svg width="12" height="13" viewBox="0 0 12 13" fill="none" stroke="#333" strokeWidth="1.200">
                <path d="M1 .500v4.500h4.500M1.300 4.700C3 2 5.500.600 8 1.200c3 .800 4 4 2.200 6.300L5.500 12.500" />
              </svg>
              元に戻す
            </button>
            <Feedback />
          </article>
          <div className="mr-[9px] mt-[10px] flex flex-col items-end gap-2 text-[12px]">
            <button type="button" className="h-[30px] whitespace-nowrap rounded-lg border border-[#9fd8b9] px-2">
              最初の列を太字にする
            </button>
            <button type="button" className="h-[30px] whitespace-nowrap rounded-lg border border-[#9fd8b9] px-2">
              '18000' の '単価' を含むアイテムを表示する
            </button>
            <button
              type="button"
              aria-label="更新"
              className="flex h-7 w-8 items-center justify-center rounded-lg border border-[#9fd8b9]"
            >
              <RotateCw size={13} strokeWidth={1.800} />
            </button>
          </div>
          <div className="mr-[5px] mt-1 flex h-[108px] flex-col rounded border border-[#d1d1d1] bg-white pl-2 pr-3 pt-3">
            <textarea
              aria-label="Copilot へのメッセージ"
              value={prompt}
              onChange={(e) => setPrompt(e.target.value)}
              placeholder="質問するか、A1:F125 に対して行う操作を入力してください"
              rows={2}
              className="h-[46px] w-full resize-none overflow-hidden outline-none placeholder:text-[#707070]"
            />
            <div className="mt-4 flex items-center justify-end">
              <button type="button" aria-label="プロンプト">
                <svg width="18" height="18" viewBox="0 0 18 18" fill="none" stroke="#333" strokeWidth="1.200">
                  <path d="M6 1.500c.7 3 1.500 3.800 4.500 4.500C7.500 6.700 6.700 7.500 6 10.500 5.300 7.500 4.500 6.700 1.500 6 4.500 5.300 5.300 4.500 6 1.500z" />
                  <path d="M12 6.500h3c1 0 2 .8 2 2V15c0 1-1 2-2 2H8c-1 0-2-.8-2-2v-2M9.500 10h5M9 13.500h4M15.500 0v4M13.500 2h4M2 13.500v4M0 15.500h4" />
                </svg>
              </button>
              <Divider className="ml-[7px] h-5" />
              <button type="button" aria-label="音声入力" className="ml-[11px]">
                <Mic size={18} strokeWidth={1.600} />
              </button>
              <button type="button" aria-label="送信" className="ml-[18px] mr-1">
                <svg width="17" height="17" viewBox="0 0 17 17" fill="none" stroke="#b8b8b8" strokeLinejoin="round">
                  <path d="M1 1l15 7.500L1 16l2-7.500zM3 8.500h7" />
                </svg>
              </button>
            </div>
          </div>
        </div>
        <div className="mt-[5px] w-[11px] shrink-0 rounded-t-full bg-[#f0f0f0] pl-[2px]">
          <div className="mt-[392px] h-[130px] w-[7px] rounded-full bg-[#616161]" />
        </div>
      </div>
      <div className="h-[13px] shrink-0" />
    </aside>
  );
}

function StatusBar() {
  return (
    <footer className="flex h-[22px] shrink-0 items-center border-t border-[#c4c4c4] bg-[#f5f5f5] text-[12px]">
      <span className="ml-[11px]">準備完了</span>
      <svg width="15" height="14" viewBox="0 0 15 14" className="ml-5" fill="none" stroke="#333">
        <path d="M5 12.500H.500V.500h13V4M.500 3.500h13M2.500 6h3M2.500 8.500h2M2.500 10.500h2" />
        <circle cx="10" cy="9" r="4.200" />
        <circle cx="10" cy="9" r="1.500" fill="#333" />
      </svg>
      <div className="ml-auto flex h-full items-center">
        <button type="button" aria-label="標準" className="flex h-full w-10 items-center justify-center bg-[#dedede]">
          <svg width="13" height="13" viewBox="0 0 13 13" fill="none" stroke="#333" shapeRendering="crispEdges">
            <path d="M.5.500h12v12H.5zM4.500.500v12M8.500.500v12M.5 4.500h12M.5 8.500h12" />
          </svg>
        </button>
        <button type="button" aria-label="ページ レイアウト" className="flex h-full w-10 items-center justify-center">
          <svg width="14" height="13" viewBox="0 0 14 13" fill="none" stroke="#333" shapeRendering="crispEdges">
            <path d="M.5.500h13v12H.5zM3.500 2.500h7v8h-7zM5 4.500h4M5 6.500h4M5 8.500h4" />
          </svg>
        </button>
        <button type="button" aria-label="改ページ プレビュー" className="flex h-full w-10 items-center justify-center">
          <svg width="14" height="13" viewBox="0 0 14 13" fill="none" stroke="#333" shapeRendering="crispEdges">
            <path d="M.5.500h13v12H.5zM5.500.500v7M9.500.500v7M.5 7.500h9" />
          </svg>
        </button>
        <button type="button" aria-label="縮小" className="ml-1">
          <Minus size={12} strokeWidth={2} />
        </button>
        <input
          type="range"
          min={0}
          max={100}
          defaultValue={50}
          aria-label="ズーム"
          className="mx-[3px] h-px w-[100px] appearance-none bg-[#666] [&::-webkit-slider-thumb]:h-[11px] [&::-webkit-slider-thumb]:w-[5px] [&::-webkit-slider-thumb]:appearance-none [&::-webkit-slider-thumb]:bg-[#555]"
        />
        <button type="button" aria-label="拡大">
          <Plus size={12} strokeWidth={1.800} />
        </button>
        <span className="ml-[11px] mr-[20px]">100%</span>
      </div>
    </footer>
  );
}

export default function App() {
  return (
    <div className="flex h-screen flex-col overflow-hidden border border-[#7f7f7f] bg-[#f0f0f0] font-['Noto_Sans','Noto_Sans_CJK_JP',sans-serif] text-[#262626] [font-feature-settings:'palt']">
      <TitleBar />
      <TabRow />
      <Ribbon />
      <FormulaBar />
      <div className="flex min-h-0 flex-1">
        <main className="flex min-w-0 flex-1 flex-col">
          <div className="flex min-h-0 flex-1 pt-[7px]">
            <div className="relative min-w-0 flex-1">
              <div className="h-full overflow-hidden">
                <SheetTable />
              </div>
              <CopilotMenu />
            </div>
            <div className="ml-[2px] mr-[3px] flex w-4 shrink-0 flex-col items-center rounded-full bg-[#f7f7f7] pb-[3px] pt-[5px]">
              <span className="border-x-[5px] border-b-[7px] border-x-transparent border-b-[#6e6e6e]" />
              <span className="mt-[5px] h-[147px] w-[9px] rounded-full bg-[#6e6e6e]" />
              <span className="mt-auto border-x-[5px] border-t-[7px] border-x-transparent border-t-[#6e6e6e]" />
            </div>
          </div>
          <SheetTabs />
        </main>
        <CopilotPane />
      </div>
      <StatusBar />
    </div>
  );
}
